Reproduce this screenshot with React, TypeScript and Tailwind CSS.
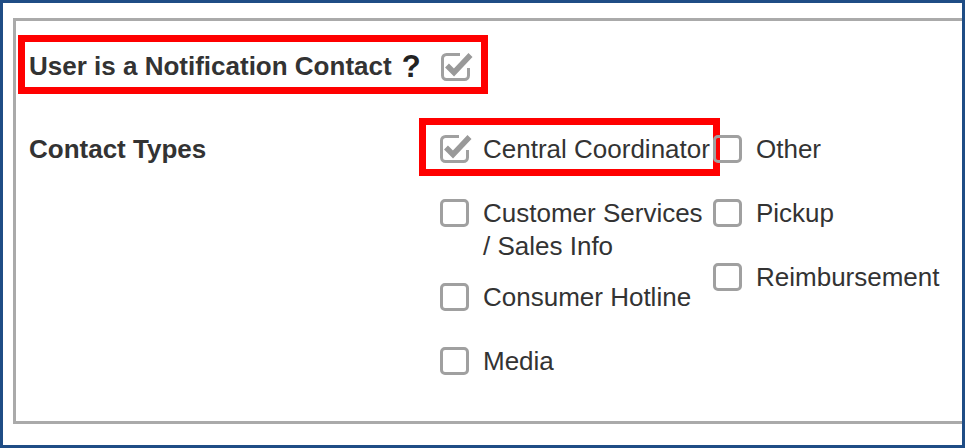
import React from "react";

const COL_ONE = ["Central Coordinator", "Customer Services / Sales Info", "Consumer Hotline", "Media"];
const COL_TWO = ["Other", "Pickup", "Reimbursement"];

function CheckedBox() {
  return (
    <svg width="29" height="28" viewBox="0 0 29 28" className="overflow-visible shrink-0">
      <path
        d="M19 1.5 H5.5 A4 4 0 0 0 1.5 5.5 V22.5 A4 4 0 0 0 5.5 26.5 H23.5 A4 4 0 0 0 27.5 22.5 V15"
        fill="none"
        stroke="#a0a0a0"
        strokeWidth="3"
      />
      <path d="M6 12.5 L13 19.5 L29.5 2" fill="none" stroke="#999999" strokeWidth="5.5" />
    </svg>
  );
}

function EmptyBox() {
  return <div className="w-[29px] h-[28px] shrink-0 border-[3px] border-[#a0a0a0] rounded-[5px]" />;
}

function Option(props: { label: string; checked?: boolean; marked?: boolean }) {
  return (
    <div className="relative flex items-start min-h-[46px]">
      <div className="mt-[2px]">{props.checked ? <CheckedBox /> : <EmptyBox />}</div>
      <span className="ml-[14px] w-[230px] leading-[33px]">{props.label}</span>
      {props.marked && (
        <span className="absolute -left-[21px] -top-[15px] w-[301px] h-[58px] border-[7px] border-[#ff0000]" />
      )}
    </div>
  );
}

export default function App() {
  return (
    <div
      className="w-[965px] h-[448px] border-[3px] border-[#1f4d85] bg-white pt-[15px] pl-[10px] pb-[21px] text-[26px] text-[#333] overflow-hidden"
      style={{ fontFamily: '"Liberation Sans", Arial, sans-serif' }}
    >
      <div className="h-full border-[3px] border-r-0 border-[#aaaaaa] pl-[13px] pt-[26px]">
        <div className="relative inline-flex items-center">
          <span className="font-bold leading-[33px]">User is a Notification Contact</span>
          <span className="ml-[10px] font-black text-[31px] leading-[33px] text-[#222]">?</span>
          <div className="ml-[20px]">
            <CheckedBox />
          </div>
          <span className="absolute -left-[11px] -top-[15px] -bottom-[11px] -right-[18px] border-[7px] border-[#ff0000]" />
        </div>

        <div className="flex mt-[47px]">
          <div className="w-[411px] shrink-0 font-bold leading-[33px]">Contact Types</div>
          <div className="flex">
            <div className="flex flex-col gap-[18px] w-[273px] shrink-0">
              {COL_ONE.map((label, i) => (
                <Option key={label} label={label} checked={i === 0} marked={i === 0} />
              ))}
            </div>
            <div className="flex flex-col gap-[18px]">
              {COL_TWO.map((label) => (
                <Option key={label} label={label} />
              ))}
            </div>
          </div>
        </div>
      </div>
    </div>
  );
}
